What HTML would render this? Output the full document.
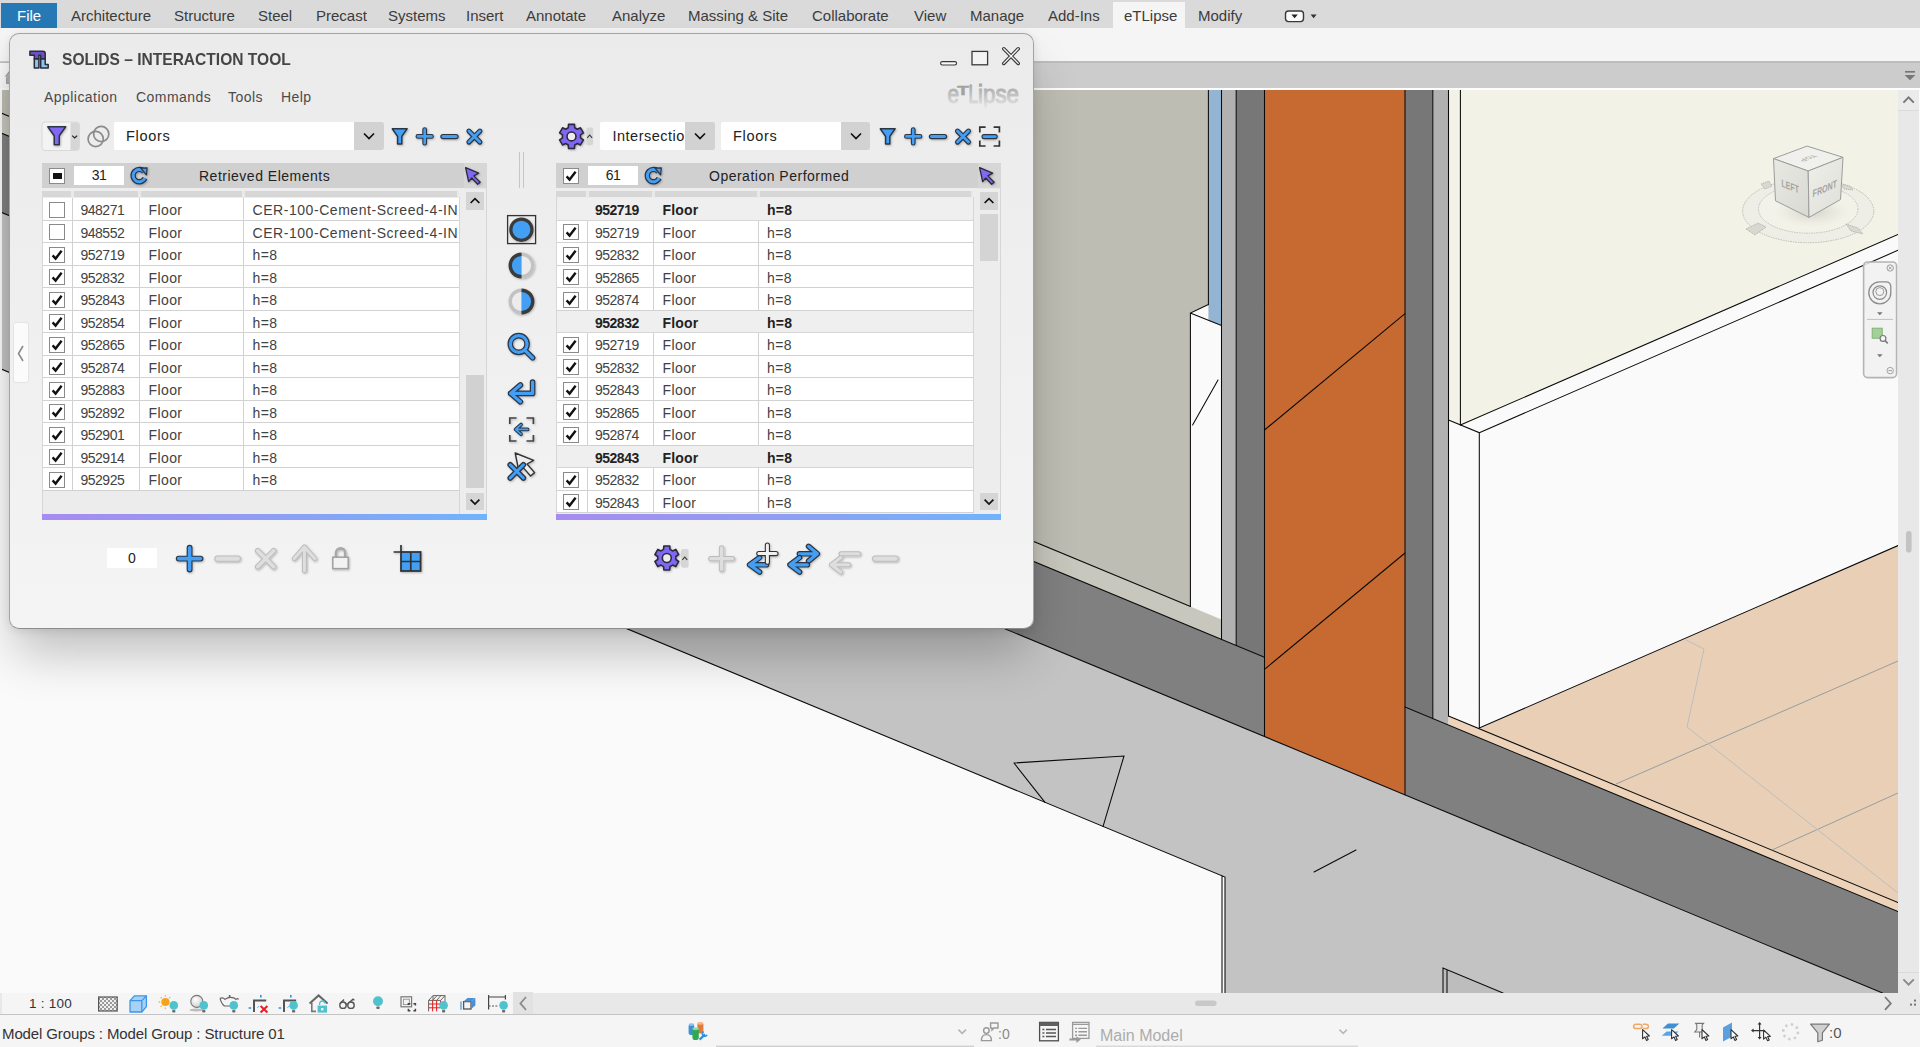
<!DOCTYPE html>
<html lang="en"><head><meta charset="utf-8"><title>SOLIDS – INTERACTION TOOL</title>
<style>
*{box-sizing:border-box}
html,body{margin:0;padding:0}
body{width:1920px;height:1047px;overflow:hidden;position:relative;background:#fafafa;font-family:"Liberation Sans",sans-serif;color:#333}
.abs{position:absolute}
#tabs{left:0;top:0;width:1920px;height:28px;background:#dadada}
#tabs span{position:absolute;top:6px;font-size:15px;color:#3c3c3c;white-space:nowrap;line-height:19px}
#filetab{left:1px;top:3px;width:56px;height:25px;background:#2779b5}
#etab{left:1113px;top:2px;width:72px;height:26px;background:#f5f5f5}
#panel{left:0;top:28px;width:1920px;height:33px;background:#f5f5f5}
#bar2{left:0;top:61px;width:1920px;height:27px;background:linear-gradient(90deg,#f8f8f8 0,#f8f8f8 12px,#cccccc 12px);border-top:2px solid #bdbdbd}
#wline{left:0;top:88px;width:1920px;height:2px;background:#fdfdfd}
#view{left:2px;top:90px;width:1896px;height:903px;overflow:hidden;background:#fafafa}
#vscroll{left:1898px;top:90px;width:22px;height:903px;background:#e8e8e8}
#vcb{left:0;top:993px;width:1920px;height:21px;background:#e8e8e8}
#vcbl{left:2px;top:993px;width:511px;height:21px;background:#f5f5f5}
#sline{left:0;top:1014px;width:1920px;height:1px;background:#c4c4c4}
#status{left:0;top:1015px;width:1920px;height:32px;background:#f5f5f5}
#status .t{position:absolute;font-size:15px;white-space:nowrap;line-height:18px}
</style></head><body>
<div id="tabs" class="abs"></div>
<div id="panel" class="abs"></div>
<div id="bar2" class="abs"></div>
<div id="wline" class="abs"></div>
<div id="view" class="abs">
<svg width="1898" height="903" viewBox="0 90 1898 903" style="position:absolute;left:-2px;top:0">
<g stroke="none">
<polygon points="0,211.8 1882.5,993 1225,993 1225,877 0,368.6" fill="#c3c3c3"/>
<polygon points="0,90 1221.6,90 1221.6,619.4 0,112.5" fill="#bdbdb3"/>
<polygon points="0,112.5 1221.6,619.4 1221.6,639.4 0,132.5" fill="#c7c7bd"/>
<polygon points="0,132.5 1264.4,657.2 1264.4,736.5 0,211.8" fill="#808080"/>
<rect x="1208.4" y="90" width="13.2" height="236" fill="#93b5d3"/>
<polygon points="1190.3,313 1208.4,304.6 1208.4,320.4 1221.5,325.6 1221.6,619.4 1190.5,606.5" fill="#fafafa"/>
<polygon points="1221.5,90 1236.2,90 1236.2,645.5 1221.5,639.4" fill="#b1b1b1"/>
<polygon points="1236.2,90 1264.5,90 1264.5,657.2 1236.2,645.5" fill="#777777"/>
<polygon points="1264.5,90 1405,90 1405,794.8 1264.5,736.5" fill="#c66a31"/>
<polygon points="1405,90 1432.8,90 1432.8,718.5 1405,707.0" fill="#777777"/>
<polygon points="1432.8,90 1448.5,90 1448.5,725.1 1432.8,718.5" fill="#b1b1b1"/>
<polygon points="1448.5,90 1898,90 1898,234.5 1460.4,425.1 1448.5,420.1" fill="#f2f2e6"/>
<polygon points="1448.5,716 1479.3,728 1898,545.6 1898,902.5" fill="#e8cfb6"/>
<polygon points="1448.5,716 1898,902.5 1898,911.6 1448.5,725.1" fill="#ecd3ba"/>
<polygon points="1405,707 1898,911.6 1898,993 1882.5,993 1405,794.8" fill="#808080"/>
<polygon points="1443,968 1503,993 1443,993" fill="#bdbdbd"/>
</g>
<g stroke="#0a0a0a" stroke-width="1.05" fill="none" stroke-linecap="round">
<path d="M0,368.6 L1225,877 L1225,993 M1222,875.8 L1222,993"/>
<path d="M0,112.5 L1190.5,606.5"/>
<path d="M0,132.5 L1264.5,657.2"/>
<path d="M0,211.8 L1882.5,993"/>
<path d="M1208.4,90 V304.6 M1221.5,90 V639.4 M1236.2,90 V645.5 M1264.5,90 V736.5 M1405,90 V794.8 M1432.8,90 V718.5 M1448.5,90 V716 M1460.4,90 V425.1"/>
<path d="M1190.4,606.5 V313 L1208.4,304.6 M1190.3,313 L1221.5,325.6"/>
<path d="M1218,380 L1192.6,425"/>
<path d="M1264.5,669.3 L1405,553 M1264.5,430 L1405,313.7"/>
<path d="M1460.4,425.1 L1898,234.5 M1479.3,432.7 L1898,250.3 M1448.5,420.1 L1479.3,432.7 V728 L1898,545.6"/>
<path d="M1405,707 L1898,911.6"/>
<path d="M1448.5,716 L1898,902.5"/>
<path d="M1014,763 L1124,756 L1103,826.6 M1014,763 L1045,802.4"/>
<path d="M1314,872 L1356,850"/>
<path d="M1443,993 V968 L1503,993 M1447,993 V970"/>
</g>
<g stroke="#8f989d" stroke-width="1" fill="none" opacity="0.9">
<path d="M1616,784 L1898,661 M1772,850 L1898,793"/>
<path d="M1686,640 L1704,649 L1687,727 L1898,893" stroke="#b9bcbc"/>
</g></svg></div>
<div id="vscroll" class="abs"></div><div id="filetab" class="abs"></div>
<div id="etab" class="abs"></div>
<div id="tabs2" class="abs" style="left:0;top:0;width:1920px;height:28px">
<style>#tabs2 span{position:absolute;top:6px;font-size:15px;color:#3c3c3c;white-space:nowrap;line-height:19px}</style>
<span style="left:17px;color:#fff">File</span>
<span style="left:71px">Architecture</span>
<span style="left:174px">Structure</span>
<span style="left:258px">Steel</span>
<span style="left:316px">Precast</span>
<span style="left:388px">Systems</span>
<span style="left:466px">Insert</span>
<span style="left:526px">Annotate</span>
<span style="left:612px">Analyze</span>
<span style="left:688px">Massing &amp; Site</span>
<span style="left:812px">Collaborate</span>
<span style="left:914px">View</span>
<span style="left:970px">Manage</span>
<span style="left:1048px">Add-Ins</span>
<span style="left:1124px">eTLipse</span>
<span style="left:1198px">Modify</span>
</div>
<div id="vcb" class="abs"></div>
<div id="vcbl" class="abs"></div>
<div id="sline" class="abs"></div>
<div id="status" class="abs">
<span class="t" style="left:2px;top:9.5px;color:#333;letter-spacing:-.12px">Model Groups : Model Group : Structure 01</span>
<span class="t" style="left:1100px;top:11.5px;color:#acacac;font-size:16px">Main Model</span>
<span class="t" style="left:998px;top:10px;color:#8a8a8a;font-size:14px">:0</span>
<span class="t" style="left:1829px;top:9px;color:#555;font-size:15px">:0</span>
</div>
<div class="abs" style="left:29px;top:996px;font-size:13.5px;letter-spacing:.25px;color:#333;white-space:nowrap">1 : 100</div>
<svg class="abs" style="left:0;top:0;pointer-events:none" width="1920" height="1047" viewBox="0 0 1920 1047">
<defs><pattern id="chk" width="4" height="4" patternUnits="userSpaceOnUse"><rect width="4" height="4" fill="#f0f0f0"/><rect width="2" height="2" fill="#9a9a9a"/><rect x="2" y="2" width="2" height="2" fill="#9a9a9a"/></pattern>
<radialGradient id="sph" cx="40%" cy="35%" r="70%"><stop offset="0" stop-color="#fff"/><stop offset="1" stop-color="#cfcfcf"/></radialGradient>
<radialGradient id="vcsh" cx="50%" cy="50%" r="50%"><stop offset="0" stop-color="#b8b8ae" stop-opacity=".55"/><stop offset="1" stop-color="#d8d8ce" stop-opacity="0"/></radialGradient>
<linearGradient id="vcl" x1="0" y1="0" x2="1" y2="1"><stop offset="0" stop-color="#e9e9e4"/><stop offset="1" stop-color="#d9d9d3"/></linearGradient>
<linearGradient id="vcr" x1="0" y1="0" x2="1" y2="1"><stop offset="0" stop-color="#efefea"/><stop offset="1" stop-color="#dfdfd9"/></linearGradient></defs>
<rect x="1285.5" y="11" width="18" height="10.6" rx="3" fill="#fafafa" stroke="#3a3a3a" stroke-width="1.4"/><path d="M1291.4,14.6 h6.4 l-3.2,3.6 z" fill="#222"/><path d="M1310.6,14.6 h6 l-3,3.6 z" fill="#333"/>
<path d="M1905,71.8 h10" stroke="#777" stroke-width="1.7"/><path d="M1904.6,75 h10.8 l-5.4,5.2 z" fill="#777"/>
<rect x="1898" y="90" width="21" height="20" fill="#ebebeb"/><rect x="1898" y="110" width="21" height="1" fill="#dadada"/><rect x="1919" y="90" width="1" height="903" fill="#fbfbfb"/><path d="M1903.4,102.6 L1908.6,97.4 L1913.8,102.6" fill="none" stroke="#777" stroke-width="1.9"/>
<rect x="1898" y="972" width="21" height="1" fill="#dadada"/><path d="M1903.4,979.4 L1908.6,984.6 L1913.8,979.4" fill="none" stroke="#8a8a8a" stroke-width="1.9"/>
<rect x="1906" y="531" width="5.6" height="21.6" rx="2.8" fill="#c3c3c3"/>
<rect x="1195" y="1000.4" width="21.6" height="5.6" rx="2.8" fill="#c8c8c8"/>
<path d="M1885,997 L1890.8,1003.4 L1885,1009.8" fill="none" stroke="#7a7a7a" stroke-width="1.8"/>
<rect x="1910" y="1003.6" width="2" height="2" fill="#777"/><rect x="1914" y="1003.6" width="2" height="2" fill="#777"/><rect x="1914" y="999.6" width="2" height="2" fill="#777"/>
<rect x="513" y="992" width="20" height="22" fill="#e2e2e2"/><path d="M526,997 L520.4,1003.4 L526,1009.8" fill="none" stroke="#8c8c8c" stroke-width="1.8"/>
<path d="M5.4,76.5 L9.6,71 V83.4 H6.6 V78" fill="#b4b4b4" stroke="#9a9a9a" stroke-width="1"/>
<rect x="0" y="61" width="10" height="1" fill="#cfcfcf"/>
<rect x="98.6" y="997" width="18.6" height="14" fill="url(#chk)" stroke="#555" stroke-width="1.2"/>
<path d="M130,1000.6 L134.6,995.8 H146.4 V1006.6 L141.8,1012 H130 Z" fill="#a9d1f6" stroke="#3a97ea" stroke-width="1.3" stroke-linejoin="round"/><path d="M130,1000.6 H141.8 V1012 M141.8,1000.6 L146.4,995.8" fill="none" stroke="#3a97ea" stroke-width="1.3"/>
<circle cx="165.4" cy="1002" r="4.1" fill="#f6a31c"/><g stroke="#f8b84e" stroke-width="1.3"><path d="M165.4,995 v1.6 M165.4,1007.4 v1.6 M158.6,1002 h1.6 M160.6,997.2 l1.1,1.1 M170.2,997.2 l-1.1,1.1 M160.6,1006.8 l1.1,-1.1"/></g>
<circle cx="173.8" cy="1005.4" r="4.3" fill="#4fc3cd"/><rect x="172.20000000000002" y="1009.9999999999999" width="3.2" height="2.6" rx="0.8" fill="#6d6d6d"/>
<ellipse cx="196.4" cy="1010" rx="7" ry="1.5" fill="#bdbdbd"/><circle cx="196.8" cy="1001.4" r="6" fill="url(#sph)" stroke="#777" stroke-width="1.1"/>
<circle cx="203.8" cy="1005.4" r="4.3" fill="#4fc3cd"/><rect x="202.20000000000002" y="1009.9999999999999" width="3.2" height="2.6" rx="0.8" fill="#6d6d6d"/>
<path d="M220,998.4 q3,-1.4 5,1 q2.4,-2 5.6,-2 q3.6,0 5.4,2 q1.6,-1.6 2.6,0 M220,998.4 q1.6,5.6 4.4,7.6 h8" fill="none" stroke="#666" stroke-width="1.2"/><path d="M229.6,995 v2" stroke="#666" stroke-width="1.6"/>
<circle cx="233.8" cy="1005.4" r="4.3" fill="#4fc3cd"/><rect x="232.20000000000002" y="1009.9999999999999" width="3.2" height="2.6" rx="0.8" fill="#6d6d6d"/>
<path d="M254.0,1012 V1000.4 H266.2" fill="none" stroke="#555" stroke-width="2"/><path d="M248.6,1008 h2.6 M260.8,995 v2.6" stroke="#2f8fe0" stroke-width="1.6"/><path d="M257.6,1007.6 l1.4,-1.4" stroke="#2f8fe0" stroke-width="1"/>
<path d="M260.6,1006 L267.4,1012.4 M267.4,1006 L260.6,1012.4" stroke="#ee1c25" stroke-width="2.1"/>
<path d="M284.0,1012 V1000.4 H296.20000000000005" fill="none" stroke="#555" stroke-width="2"/><path d="M278.6,1008 h2.6 M290.8,995 v2.6" stroke="#2f8fe0" stroke-width="1.6"/><path d="M287.6,1007.6 l1.4,-1.4" stroke="#2f8fe0" stroke-width="1"/>
<circle cx="293.6" cy="1005.4" r="4.3" fill="#4fc3cd"/><rect x="292.0" y="1009.9999999999999" width="3.2" height="2.6" rx="0.8" fill="#6d6d6d"/>
<path d="M309.6,1003.6 L318.6,995.4 L327.6,1003.6" fill="none" stroke="#666" stroke-width="2"/><path d="M311.8,1002.6 V1011.4 H316" fill="none" stroke="#777" stroke-width="1.6"/><path d="M319.6,1005.2 v-1.6 a2.6,2.6 0 0 1 5.2,0" fill="none" stroke="#4fc3cd" stroke-width="1.3"/><rect x="317.6" y="1005.6" width="9.4" height="7" fill="#4fc3cd"/><rect x="321" y="1008" width="2.4" height="2.4" fill="#e9fbfc"/>
<g fill="none" stroke="#555" stroke-width="1.4"><circle cx="343" cy="1005.2" r="3.2"/><circle cx="351" cy="1005.2" r="3.2"/><path d="M346.2,1004.4 q0.8,-0.8 1.6,0 M340.6,1003 l3.4,-3.4 M349.4,1002.6 l3.6,-3.4 l1.4,1"/></g>
<circle cx="378" cy="1001.2" r="5" fill="#4fc3cd"/><rect x="376.4" y="1006.5" width="3.2" height="2.6" rx="0.8" fill="#6d6d6d"/>
<rect x="401" y="996.8" width="10.6" height="10" fill="#f5f5f5" stroke="#777" stroke-width="1.2"/><rect x="403.4" y="999.2" width="6" height="5.4" fill="none" stroke="#999" stroke-width="1"/><path d="M408.4,1005 v-1.2 h2 M413.4,1003.8 h2 v1.8 M415.4,1008.8 v2 h-2 M410.4,1010.8 h-2 v-2" fill="none" stroke="#444" stroke-width="1.5"/>
<g fill="none" stroke="#666" stroke-width="1"><path d="M428.6,1000.4 L433,995.6 H445 V1006 M428.6,1000.4 H440.6 L445,995.6 M428.6,1000.4 V1011.4 M433,995.6 V1000 M437,995.6 l-4.4,4.8 M441,995.6 l-4.4,4.8"/></g><g fill="none" stroke="#e02020" stroke-width="1"><path d="M432.6,1000.4 V1011.4 M436.6,1000.4 V1011.4 M428.6,1004 H440 M428.6,1007.8 H440 M440.6,1000.4 V1004"/></g>
<circle cx="443.6" cy="1005.4" r="4.3" fill="#4fc3cd"/><rect x="442.0" y="1009.9999999999999" width="3.2" height="2.6" rx="0.8" fill="#6d6d6d"/>
<path d="M461,1009.8 V1001.6" stroke="#4a90d9" stroke-width="1.2"/><rect x="463.6" y="1001.6" width="7.4" height="7.4" fill="#f4f4f4" stroke="#555" stroke-width="1.3"/><path d="M463.6,1001.6 L467.4,998 H475.4 L471,1001.6 Z" fill="#4a90d9"/><path d="M471,1001.6 L475.4,998 V1005.6 L471,1009 Z" fill="#4a90d9"/>
<path d="M488.6,995 V1009.4 M505.4,995 V999.6 M488.6,997 H505.4" fill="none" stroke="#444" stroke-width="1.2"/><path d="M488.6,1006 H498" stroke="#555" stroke-width="1.2" stroke-dasharray="2 1.4"/>
<circle cx="503.6" cy="1005.4" r="4.3" fill="#4fc3cd"/><rect x="502.0" y="1009.9999999999999" width="3.2" height="2.6" rx="0.8" fill="#6d6d6d"/>
<g><rect x="688.6" y="1024" width="5.6" height="11" rx="2" fill="#3f8fd6"/><ellipse cx="691.4" cy="1024.6" rx="2.8" ry="1.3" fill="#8cc3f0"/><rect x="697.4" y="1022.6" width="6" height="11" rx="2" fill="#e3793a"/><ellipse cx="700.4" cy="1023.4" rx="3" ry="1.3" fill="#f5b891"/><rect x="692.4" y="1028" width="6.4" height="12" rx="2.2" fill="#2fa84f"/><ellipse cx="695.6" cy="1028.8" rx="3.2" ry="1.4" fill="#8fdca3"/><path d="M699.6,1039.6 L705,1034.4" stroke="#2f8fe0" stroke-width="2.2"/><path d="M703.6,1031.8 a2.4,2.4 0 1 0 3.4,3" fill="none" stroke="#2f8fe0" stroke-width="1.6"/></g>
<rect x="716" y="1045.6" width="258" height="1.4" fill="#d0d0d0"/><rect x="1096" y="1045.6" width="262" height="1.4" fill="#d8d8d8"/>
<path d="M958.4,1029.6 L962.2,1033.4 L966,1029.6" fill="none" stroke="#b4b4b4" stroke-width="1.5"/><path d="M1339.4,1029.6 L1343.2,1033.4 L1347,1029.6" fill="none" stroke="#b9b9b9" stroke-width="1.5"/>
<g fill="none" stroke="#999" stroke-width="1.4"><circle cx="986.4" cy="1030.6" r="2.8"/><path d="M981.4,1040.6 q0,-6 5,-6 q5,0 5,6 z"/><path d="M990.6,1023 h7.4 v5 h-4 l-2,2 v-2 h-1.4 z"/></g>
<rect x="1039.6" y="1022.4" width="18.8" height="18.4" fill="#f6f6f6" stroke="#4c4c4c" stroke-width="1.3"/><rect x="1039.6" y="1022.4" width="18.8" height="3.6" fill="#606060"/><g stroke="#555" stroke-width="1.5"><path d="M1042.4,1029.4 h2 M1046,1029.4 h10 M1042.4,1033 h2 M1046,1033 h10 M1042.4,1036.6 h2 M1046,1036.6 h10"/></g>
<rect x="1072.6" y="1022.4" width="16.4" height="16" fill="#f6f6f6" stroke="#9a9a9a" stroke-width="1.3"/><g stroke="#9a9a9a" stroke-width="1.4"><path d="M1072.6,1024.4 h16.4 M1075,1028.4 h2 M1078.4,1028.4 h8.6 M1075,1031.8 h2 M1078.4,1031.8 h8.6 M1075,1035.2 h2 M1078.4,1035.2 h8.6"/></g><path d="M1069.4,1038.6 h7 v-2.4 l4.4,3.4 l-4.4,3.4 v-2.4 h-7 z" fill="#9a9a9a"/>
<path d="M1636.4,1024.2 h3 q2.6,0 2.6,2.2 q0,2.2 -2.6,2.2 h-3 q-2.8,0 -2.8,-2.2 q0,-2.2 2.800,-2.200 z M1642.800,1024.2 h3 q2.600,0 2.600,2.200 q0,2.200 -2.600,2.200 h-3" fill="none" stroke="#f0a868" stroke-width="1.5"/>
<path d="M1642.60,1029.60 L1642.60,1038.80 L1644.90,1036.80 L1646.60,1040.40 L1648.20,1039.60 L1646.60,1036.20 L1649.40,1036.00Z" fill="#fff" stroke="#333" stroke-width="1.1" stroke-linejoin="round"/>
<path d="M1668,1023.600 h11.400 l-5.600,5 h-11.400 z" fill="#3f8fd6"/><path d="M1666.600,1031.400 h12 l-4.800,4.400 h-12 z" fill="#5aa3e4"/>
<path d="M1671.60,1029.60 L1671.60,1038.80 L1673.90,1036.80 L1675.60,1040.40 L1677.20,1039.60 L1675.60,1036.20 L1678.40,1036.00Z" fill="#fff" stroke="#333" stroke-width="1.1" stroke-linejoin="round"/>
<path d="M1695.600,1023.400 h8 l-1.400,1.600 v4.600 l2,2.400 h-9.400 l2,-2.400 v-4.600 z M1699.600,1032 v5.400" fill="#f0f0f0" stroke="#777" stroke-width="1.1"/>
<path d="M1702.00,1029.60 L1702.00,1038.80 L1704.30,1036.80 L1706.00,1040.40 L1707.60,1039.60 L1706.00,1036.20 L1708.80,1036.00Z" fill="#fff" stroke="#333" stroke-width="1.1" stroke-linejoin="round"/>
<path d="M1723,1027.600 l9,-5.200 v14.400 l-9,4.600 z" fill="#5a9fdf"/>
<path d="M1731.00,1029.60 L1731.00,1038.80 L1733.30,1036.80 L1735.00,1040.40 L1736.60,1039.60 L1735.00,1036.20 L1737.80,1036.00Z" fill="#fff" stroke="#333" stroke-width="1.1" stroke-linejoin="round"/>
<g stroke="#333" stroke-width="1.2" fill="#333"><path d="M1759.600,1023.600 v14.400 M1752.600,1030.600 h11" fill="none"/><path d="M1759.600,1022 l-2,2.600 h4 z M1759.600,1039.600 l-2,-2.600 h4 z M1751,1030.600 l2.600,-2 v4 z" stroke="none"/></g>
<path d="M1763.60,1030.00 L1763.60,1039.20 L1765.90,1037.20 L1767.60,1040.80 L1769.20,1040.00 L1767.60,1036.60 L1770.40,1036.40Z" fill="#fff" stroke="#333" stroke-width="1.1" stroke-linejoin="round"/>
<circle cx="1790.600" cy="1031.800" r="7.400" fill="none" stroke="#cfcfcf" stroke-width="2.600" stroke-dasharray="2.4 3.410"/>
<path d="M1810.600,1024.200 h18.800 l-7,8.600 v7.400 l-4.600,1.600 v-9 z" fill="#d0d0d0" stroke="#777" stroke-width="1.200" stroke-linejoin="round"/>
<g>
<ellipse cx="1808.200" cy="211" rx="65.600" ry="31.700" fill="#ededed" opacity="0"/>
<ellipse cx="1808.200" cy="211" rx="65.600" ry="31.700" fill="#eeeee6" stroke="#bcbcb4" stroke-width="1" stroke-dasharray="1.5 1"/>
<ellipse cx="1808.200" cy="209" rx="49.700" ry="24.200" fill="#f2f2e8" stroke="#c2c2ba" stroke-width="1" stroke-dasharray="1.5 1"/>
<ellipse cx="1812" cy="212" rx="38" ry="15" fill="url(#vcsh)"/>
<path d="M1773.500,158.600 L1807,146.100 L1843,157.300 L1808.200,171 Z" fill="#f0f0ec" stroke="#9c9c9c" stroke-width="1"/>
<path d="M1773.500,158.600 L1808.200,171 L1809,217.400 L1775.500,200.800 Z" fill="url(#vcl)" stroke="#9c9c9c" stroke-width="1"/>
<path d="M1808.200,171 L1843,157.300 L1840.500,199.500 L1809,217.400 Z" fill="url(#vcr)" stroke="#9c9c9c" stroke-width="1"/>
<g font-family="Liberation Sans, sans-serif" font-weight="bold" fill="#a3a3a0">
<text transform="matrix(0.92,0.36,0.02,1,1781.600,186.500)" font-size="10.500" textLength="19" lengthAdjust="spacingAndGlyphs">LEFT</text>
<text transform="matrix(0.90,-0.40,-0.03,1,1812.600,197.600)" font-size="10.500" textLength="27" lengthAdjust="spacingAndGlyphs">FRONT</text>
<text transform="matrix(-0.74,0.29,-0.72,-0.26,1813,154.4)" font-size="9.5" fill="#b0b0ab">TOP</text>
</g>
<g fill="#d8d8d0" stroke="#aaa9a0" stroke-width=".8" stroke-dasharray="1.2 .8"><path d="M1761,184 l8,-3 l3,5 l-7,3 z M1841,184 l9,2 l3,4 l-9,-1 z M1746,229 l12,-6 l8,4 l-11,8 z M1846,224 l12,4 l5,6 l-12,-3 z"/></g>
</g>
<rect x="1863.600" y="262" width="33" height="115.600" rx="4" fill="#f0f0f0" fill-opacity=".85" stroke="#b4b4b4" stroke-width="1.600"/>
<circle cx="1890.200" cy="268" r="3.200" fill="#f4f4f4" stroke="#a0a0a0" stroke-width="1"/><path d="M1888.600,266.400 l3.200,3.200 M1891.800,266.400 l-3.200,3.200" stroke="#a0a0a0" stroke-width="1"/>
<path d="M1879.800,281.800 h6 q5,0 5,5 v5.600 a11,11 0 1 1 -11,-10.600 z" fill="#f2f2f2" stroke="#8c8c8c" stroke-width="1.300"/><circle cx="1879.800" cy="292.600" r="6.800" fill="none" stroke="#8c8c8c" stroke-width="1.200"/><circle cx="1879.800" cy="291.600" r="4" fill="none" stroke="#9a9a9a" stroke-width="1"/>
<path d="M1877,312.200 h5.600 l-2.800,3 z M1877,354.200 h5.600 l-2.800,3 z" fill="#777"/>
<path d="M1867,319.400 h26" stroke="#c0c0c0" stroke-width="1"/>
<rect x="1872.200" y="328.200" width="10" height="10" fill="#a5cf9a" stroke="#7fb273" stroke-width="1"/><circle cx="1883" cy="338.400" r="2.900" fill="#f4f4f4" stroke="#777" stroke-width="1.200"/><path d="M1885,340.600 l2.800,2.800" stroke="#777" stroke-width="1.500"/>
<circle cx="1890.200" cy="370.600" r="3.200" fill="#f4f4f4" stroke="#a0a0a0" stroke-width="1"/><path d="M1888.400,370.600 h3.600" stroke="#a0a0a0" stroke-width="1.100"/>
</svg><style>
#dlg{left:9px;top:33px;width:1025px;height:596px;border:1px solid #a4a4a4;border-bottom-color:#8c8c8c;border-radius:10px;background:linear-gradient(#ebebeb,#f4f4f4);box-shadow:0 30px 50px -6px rgba(0,0,0,.24),0 2px 10px rgba(0,0,0,.10);overflow:hidden}
#dlg .dt{font-size:14px;color:#424242;white-space:nowrap;line-height:16px}
#dlg .num{letter-spacing:-0.5px}
#dlg .cb{background:#fff;border:1px solid #8a8a8a}
#dlg .row{background:#fff;border-bottom:1px solid #d2d2d2}
#dlg .vl{background:#d2d2d2;width:1px}
#dlg .b{font-weight:bold;color:#222}
</style>
<div id="dlg" class="abs">
<span class="abs dt" style="left:51.5px;top:15.6px;font-size:17px;font-weight:bold;color:#454545;line-height:20px;transform-origin:0 50%;transform:scaleX(.915)">SOLIDS – INTERACTION TOOL</span>
<span class="abs dt" style="left:34px;top:54px;font-size:14px;letter-spacing:.45px;color:#4a4a4a;line-height:18px">Application</span>
<span class="abs dt" style="left:126px;top:54px;font-size:14px;letter-spacing:.45px;color:#4a4a4a;line-height:18px">Commands</span>
<span class="abs dt" style="left:218px;top:54px;font-size:14px;letter-spacing:.45px;color:#4a4a4a;line-height:18px">Tools</span>
<span class="abs dt" style="left:271px;top:54px;font-size:14px;letter-spacing:.45px;color:#4a4a4a;line-height:18px">Help</span>
<div class="abs " style="left:32px;top:129px;width:445px;height:25.3px;background:#d0d0d0"></div>
<div class="abs cb" style="left:39px;top:134px;width:16px;height:16px;"><div style="margin:4px 2.5px;width:9px;height:6px;background:#111"></div></div>
<div class="abs " style="left:64px;top:132px;width:50px;height:19px;background:#fff;text-align:center;font-size:14px;line-height:19.5px;color:#222;letter-spacing:-.5px">31</div>
<span class="abs dt" style="left:189px;top:134px;font-size:14px;letter-spacing:.5px;color:#222">Retrieved Elements</span>
<div class="abs " style="left:32px;top:157px;width:417.1px;height:6px;background:#e9e9e9"></div>
<div class="abs " style="left:32px;top:157px;width:29px;height:5.5px;background:#d7d7d7"></div>
<div class="abs " style="left:64px;top:157px;width:64px;height:5.5px;background:#d7d7d7"></div>
<div class="abs " style="left:131px;top:157px;width:101px;height:5.5px;background:#d7d7d7"></div>
<div class="abs " style="left:235px;top:157px;width:211.5px;height:5.5px;background:#d7d7d7"></div>
<div class="abs " style="left:32px;top:163px;width:417.1px;height:317px;background:#ececec"></div>
<div class="abs row" style="left:32px;top:164.25px;width:417.1px;height:22.5px;"></div>
<div class="abs vl" style="left:62px;top:164.25px;width:1px;height:22.5px;"></div>
<div class="abs vl" style="left:129px;top:164.25px;width:1px;height:22.5px;"></div>
<div class="abs vl" style="left:233px;top:164.25px;width:1px;height:22.5px;"></div>
<div class="abs cb" style="left:39px;top:167.75px;width:16px;height:16px;"></div>
<span class="abs dt num" style="left:70.5px;top:168.05px;">948271</span>
<span class="abs dt" style="left:138.5px;top:168.05px;letter-spacing:.4px">Floor</span>
<span class="abs dt" style="left:242.5px;top:168.05px;letter-spacing:.55px">CER-100-Cement-Screed-4-IN</span>
<div class="abs row" style="left:32px;top:186.75px;width:417.1px;height:22.5px;"></div>
<div class="abs vl" style="left:62px;top:186.75px;width:1px;height:22.5px;"></div>
<div class="abs vl" style="left:129px;top:186.75px;width:1px;height:22.5px;"></div>
<div class="abs vl" style="left:233px;top:186.75px;width:1px;height:22.5px;"></div>
<div class="abs cb" style="left:39px;top:190.25px;width:16px;height:16px;"></div>
<span class="abs dt num" style="left:70.5px;top:190.55px;">948552</span>
<span class="abs dt" style="left:138.5px;top:190.55px;letter-spacing:.4px">Floor</span>
<span class="abs dt" style="left:242.5px;top:190.55px;letter-spacing:.55px">CER-100-Cement-Screed-4-IN</span>
<div class="abs row" style="left:32px;top:209.25px;width:417.1px;height:22.5px;"></div>
<div class="abs vl" style="left:62px;top:209.25px;width:1px;height:22.5px;"></div>
<div class="abs vl" style="left:129px;top:209.25px;width:1px;height:22.5px;"></div>
<div class="abs vl" style="left:233px;top:209.25px;width:1px;height:22.5px;"></div>
<div class="abs cb" style="left:39px;top:212.75px;width:16px;height:16px;"><svg width="14" height="14" viewBox="0 0 14 14" style="display:block"><path d="M2.6,7.4 L5.6,10.6 L11.6,2.8" fill="none" stroke="#111" stroke-width="2.4"/></svg></div>
<span class="abs dt num" style="left:70.5px;top:213.05px;">952719</span>
<span class="abs dt" style="left:138.5px;top:213.05px;letter-spacing:.4px">Floor</span>
<span class="abs dt" style="left:242.5px;top:213.05px;letter-spacing:.4px">h=8</span>
<div class="abs row" style="left:32px;top:231.75px;width:417.1px;height:22.5px;"></div>
<div class="abs vl" style="left:62px;top:231.75px;width:1px;height:22.5px;"></div>
<div class="abs vl" style="left:129px;top:231.75px;width:1px;height:22.5px;"></div>
<div class="abs vl" style="left:233px;top:231.75px;width:1px;height:22.5px;"></div>
<div class="abs cb" style="left:39px;top:235.25px;width:16px;height:16px;"><svg width="14" height="14" viewBox="0 0 14 14" style="display:block"><path d="M2.6,7.4 L5.6,10.6 L11.6,2.8" fill="none" stroke="#111" stroke-width="2.4"/></svg></div>
<span class="abs dt num" style="left:70.5px;top:235.55px;">952832</span>
<span class="abs dt" style="left:138.5px;top:235.55px;letter-spacing:.4px">Floor</span>
<span class="abs dt" style="left:242.5px;top:235.55px;letter-spacing:.4px">h=8</span>
<div class="abs row" style="left:32px;top:254.25px;width:417.1px;height:22.5px;"></div>
<div class="abs vl" style="left:62px;top:254.25px;width:1px;height:22.5px;"></div>
<div class="abs vl" style="left:129px;top:254.25px;width:1px;height:22.5px;"></div>
<div class="abs vl" style="left:233px;top:254.25px;width:1px;height:22.5px;"></div>
<div class="abs cb" style="left:39px;top:257.75px;width:16px;height:16px;"><svg width="14" height="14" viewBox="0 0 14 14" style="display:block"><path d="M2.6,7.4 L5.6,10.6 L11.6,2.8" fill="none" stroke="#111" stroke-width="2.4"/></svg></div>
<span class="abs dt num" style="left:70.5px;top:258.05px;">952843</span>
<span class="abs dt" style="left:138.5px;top:258.05px;letter-spacing:.4px">Floor</span>
<span class="abs dt" style="left:242.5px;top:258.05px;letter-spacing:.4px">h=8</span>
<div class="abs row" style="left:32px;top:276.75px;width:417.1px;height:22.5px;"></div>
<div class="abs vl" style="left:62px;top:276.75px;width:1px;height:22.5px;"></div>
<div class="abs vl" style="left:129px;top:276.75px;width:1px;height:22.5px;"></div>
<div class="abs vl" style="left:233px;top:276.75px;width:1px;height:22.5px;"></div>
<div class="abs cb" style="left:39px;top:280.25px;width:16px;height:16px;"><svg width="14" height="14" viewBox="0 0 14 14" style="display:block"><path d="M2.6,7.4 L5.6,10.6 L11.6,2.8" fill="none" stroke="#111" stroke-width="2.4"/></svg></div>
<span class="abs dt num" style="left:70.5px;top:280.55px;">952854</span>
<span class="abs dt" style="left:138.5px;top:280.55px;letter-spacing:.4px">Floor</span>
<span class="abs dt" style="left:242.5px;top:280.55px;letter-spacing:.4px">h=8</span>
<div class="abs row" style="left:32px;top:299.25px;width:417.1px;height:22.5px;"></div>
<div class="abs vl" style="left:62px;top:299.25px;width:1px;height:22.5px;"></div>
<div class="abs vl" style="left:129px;top:299.25px;width:1px;height:22.5px;"></div>
<div class="abs vl" style="left:233px;top:299.25px;width:1px;height:22.5px;"></div>
<div class="abs cb" style="left:39px;top:302.75px;width:16px;height:16px;"><svg width="14" height="14" viewBox="0 0 14 14" style="display:block"><path d="M2.6,7.4 L5.6,10.6 L11.6,2.8" fill="none" stroke="#111" stroke-width="2.4"/></svg></div>
<span class="abs dt num" style="left:70.5px;top:303.05px;">952865</span>
<span class="abs dt" style="left:138.5px;top:303.05px;letter-spacing:.4px">Floor</span>
<span class="abs dt" style="left:242.5px;top:303.05px;letter-spacing:.4px">h=8</span>
<div class="abs row" style="left:32px;top:321.75px;width:417.1px;height:22.5px;"></div>
<div class="abs vl" style="left:62px;top:321.75px;width:1px;height:22.5px;"></div>
<div class="abs vl" style="left:129px;top:321.75px;width:1px;height:22.5px;"></div>
<div class="abs vl" style="left:233px;top:321.75px;width:1px;height:22.5px;"></div>
<div class="abs cb" style="left:39px;top:325.25px;width:16px;height:16px;"><svg width="14" height="14" viewBox="0 0 14 14" style="display:block"><path d="M2.6,7.4 L5.6,10.6 L11.6,2.8" fill="none" stroke="#111" stroke-width="2.4"/></svg></div>
<span class="abs dt num" style="left:70.5px;top:325.55px;">952874</span>
<span class="abs dt" style="left:138.5px;top:325.55px;letter-spacing:.4px">Floor</span>
<span class="abs dt" style="left:242.5px;top:325.55px;letter-spacing:.4px">h=8</span>
<div class="abs row" style="left:32px;top:344.25px;width:417.1px;height:22.5px;"></div>
<div class="abs vl" style="left:62px;top:344.25px;width:1px;height:22.5px;"></div>
<div class="abs vl" style="left:129px;top:344.25px;width:1px;height:22.5px;"></div>
<div class="abs vl" style="left:233px;top:344.25px;width:1px;height:22.5px;"></div>
<div class="abs cb" style="left:39px;top:347.75px;width:16px;height:16px;"><svg width="14" height="14" viewBox="0 0 14 14" style="display:block"><path d="M2.6,7.4 L5.6,10.6 L11.6,2.8" fill="none" stroke="#111" stroke-width="2.4"/></svg></div>
<span class="abs dt num" style="left:70.5px;top:348.05px;">952883</span>
<span class="abs dt" style="left:138.5px;top:348.05px;letter-spacing:.4px">Floor</span>
<span class="abs dt" style="left:242.5px;top:348.05px;letter-spacing:.4px">h=8</span>
<div class="abs row" style="left:32px;top:366.75px;width:417.1px;height:22.5px;"></div>
<div class="abs vl" style="left:62px;top:366.75px;width:1px;height:22.5px;"></div>
<div class="abs vl" style="left:129px;top:366.75px;width:1px;height:22.5px;"></div>
<div class="abs vl" style="left:233px;top:366.75px;width:1px;height:22.5px;"></div>
<div class="abs cb" style="left:39px;top:370.25px;width:16px;height:16px;"><svg width="14" height="14" viewBox="0 0 14 14" style="display:block"><path d="M2.6,7.4 L5.6,10.6 L11.6,2.8" fill="none" stroke="#111" stroke-width="2.4"/></svg></div>
<span class="abs dt num" style="left:70.5px;top:370.55px;">952892</span>
<span class="abs dt" style="left:138.5px;top:370.55px;letter-spacing:.4px">Floor</span>
<span class="abs dt" style="left:242.5px;top:370.55px;letter-spacing:.4px">h=8</span>
<div class="abs row" style="left:32px;top:389.25px;width:417.1px;height:22.5px;"></div>
<div class="abs vl" style="left:62px;top:389.25px;width:1px;height:22.5px;"></div>
<div class="abs vl" style="left:129px;top:389.25px;width:1px;height:22.5px;"></div>
<div class="abs vl" style="left:233px;top:389.25px;width:1px;height:22.5px;"></div>
<div class="abs cb" style="left:39px;top:392.75px;width:16px;height:16px;"><svg width="14" height="14" viewBox="0 0 14 14" style="display:block"><path d="M2.6,7.4 L5.6,10.6 L11.6,2.8" fill="none" stroke="#111" stroke-width="2.4"/></svg></div>
<span class="abs dt num" style="left:70.5px;top:393.05px;">952901</span>
<span class="abs dt" style="left:138.5px;top:393.05px;letter-spacing:.4px">Floor</span>
<span class="abs dt" style="left:242.5px;top:393.05px;letter-spacing:.4px">h=8</span>
<div class="abs row" style="left:32px;top:411.75px;width:417.1px;height:22.5px;"></div>
<div class="abs vl" style="left:62px;top:411.75px;width:1px;height:22.5px;"></div>
<div class="abs vl" style="left:129px;top:411.75px;width:1px;height:22.5px;"></div>
<div class="abs vl" style="left:233px;top:411.75px;width:1px;height:22.5px;"></div>
<div class="abs cb" style="left:39px;top:415.25px;width:16px;height:16px;"><svg width="14" height="14" viewBox="0 0 14 14" style="display:block"><path d="M2.6,7.4 L5.6,10.6 L11.6,2.8" fill="none" stroke="#111" stroke-width="2.4"/></svg></div>
<span class="abs dt num" style="left:70.5px;top:415.55px;">952914</span>
<span class="abs dt" style="left:138.5px;top:415.55px;letter-spacing:.4px">Floor</span>
<span class="abs dt" style="left:242.5px;top:415.55px;letter-spacing:.4px">h=8</span>
<div class="abs row" style="left:32px;top:434.25px;width:417.1px;height:22.5px;"></div>
<div class="abs vl" style="left:62px;top:434.25px;width:1px;height:22.5px;"></div>
<div class="abs vl" style="left:129px;top:434.25px;width:1px;height:22.5px;"></div>
<div class="abs vl" style="left:233px;top:434.25px;width:1px;height:22.5px;"></div>
<div class="abs cb" style="left:39px;top:437.75px;width:16px;height:16px;"><svg width="14" height="14" viewBox="0 0 14 14" style="display:block"><path d="M2.6,7.4 L5.6,10.6 L11.6,2.8" fill="none" stroke="#111" stroke-width="2.4"/></svg></div>
<span class="abs dt num" style="left:70.5px;top:438.05px;">952925</span>
<span class="abs dt" style="left:138.5px;top:438.05px;letter-spacing:.4px">Floor</span>
<span class="abs dt" style="left:242.5px;top:438.05px;letter-spacing:.4px">h=8</span>
<div class="abs " style="left:32px;top:163px;width:1px;height:317px;background:#d6d6d6"></div>
<div class="abs " style="left:449.1px;top:163px;width:1px;height:317px;background:#d6d6d6"></div>
<div class="abs " style="left:450.1px;top:155px;width:26.9px;height:325px;background:#ededed"></div>
<div class="abs " style="left:476px;top:154.3px;width:1px;height:326px;background:#d6d6d6"></div>
<div class="abs " style="left:32px;top:480px;width:445px;height:6px;background:linear-gradient(90deg,#a78bf0,#8f9df5 50%,#6fb4fb)"></div>
<div class="abs " style="left:546px;top:129px;width:445px;height:25.3px;background:#d0d0d0"></div>
<div class="abs cb" style="left:553px;top:134px;width:16px;height:16px;"><svg width="14" height="14" viewBox="0 0 14 14" style="display:block"><path d="M2.6,7.4 L5.6,10.6 L11.6,2.8" fill="none" stroke="#111" stroke-width="2.4"/></svg></div>
<div class="abs " style="left:578px;top:132px;width:50px;height:19px;background:#fff;text-align:center;font-size:14px;line-height:19.5px;color:#222;letter-spacing:-.5px">61</div>
<span class="abs dt" style="left:699px;top:134px;font-size:14px;letter-spacing:.5px;color:#222">Operation Performed</span>
<div class="abs " style="left:546px;top:157px;width:417.1px;height:6px;background:#e9e9e9"></div>
<div class="abs " style="left:546px;top:157px;width:29.5px;height:5.5px;background:#d7d7d7"></div>
<div class="abs " style="left:578.5px;top:157px;width:63.5px;height:5.5px;background:#d7d7d7"></div>
<div class="abs " style="left:645px;top:157px;width:101.5px;height:5.5px;background:#d7d7d7"></div>
<div class="abs " style="left:749.5px;top:157px;width:211px;height:5.5px;background:#d7d7d7"></div>
<div class="abs " style="left:546px;top:163px;width:417.1px;height:317px;background:#ececec"></div>
<div class="abs " style="left:546px;top:164.25px;width:417.1px;height:22.5px;background:#efefef;border-bottom:1px solid #d6d6d6"></div>
<span class="abs dt num b" style="left:585px;top:168.05px;">952719</span>
<span class="abs dt b" style="left:652.5px;top:168.05px;letter-spacing:.2px">Floor</span>
<span class="abs dt b" style="left:757px;top:168.05px;letter-spacing:.2px">h=8</span>
<div class="abs row" style="left:546px;top:186.75px;width:417.1px;height:22.5px;"></div>
<div class="abs vl" style="left:576.5px;top:186.75px;width:1px;height:22.5px;"></div>
<div class="abs vl" style="left:643px;top:186.75px;width:1px;height:22.5px;"></div>
<div class="abs vl" style="left:747.5px;top:186.75px;width:1px;height:22.5px;"></div>
<div class="abs cb" style="left:553px;top:190.25px;width:16px;height:16px;"><svg width="14" height="14" viewBox="0 0 14 14" style="display:block"><path d="M2.6,7.4 L5.6,10.6 L11.6,2.8" fill="none" stroke="#111" stroke-width="2.4"/></svg></div>
<span class="abs dt num" style="left:585px;top:190.55px;">952719</span>
<span class="abs dt" style="left:652.5px;top:190.55px;letter-spacing:.4px">Floor</span>
<span class="abs dt" style="left:757px;top:190.55px;letter-spacing:.4px">h=8</span>
<div class="abs row" style="left:546px;top:209.25px;width:417.1px;height:22.5px;"></div>
<div class="abs vl" style="left:576.5px;top:209.25px;width:1px;height:22.5px;"></div>
<div class="abs vl" style="left:643px;top:209.25px;width:1px;height:22.5px;"></div>
<div class="abs vl" style="left:747.5px;top:209.25px;width:1px;height:22.5px;"></div>
<div class="abs cb" style="left:553px;top:212.75px;width:16px;height:16px;"><svg width="14" height="14" viewBox="0 0 14 14" style="display:block"><path d="M2.6,7.4 L5.6,10.6 L11.6,2.8" fill="none" stroke="#111" stroke-width="2.4"/></svg></div>
<span class="abs dt num" style="left:585px;top:213.05px;">952832</span>
<span class="abs dt" style="left:652.5px;top:213.05px;letter-spacing:.4px">Floor</span>
<span class="abs dt" style="left:757px;top:213.05px;letter-spacing:.4px">h=8</span>
<div class="abs row" style="left:546px;top:231.75px;width:417.1px;height:22.5px;"></div>
<div class="abs vl" style="left:576.5px;top:231.75px;width:1px;height:22.5px;"></div>
<div class="abs vl" style="left:643px;top:231.75px;width:1px;height:22.5px;"></div>
<div class="abs vl" style="left:747.5px;top:231.75px;width:1px;height:22.5px;"></div>
<div class="abs cb" style="left:553px;top:235.25px;width:16px;height:16px;"><svg width="14" height="14" viewBox="0 0 14 14" style="display:block"><path d="M2.6,7.4 L5.6,10.6 L11.6,2.8" fill="none" stroke="#111" stroke-width="2.4"/></svg></div>
<span class="abs dt num" style="left:585px;top:235.55px;">952865</span>
<span class="abs dt" style="left:652.5px;top:235.55px;letter-spacing:.4px">Floor</span>
<span class="abs dt" style="left:757px;top:235.55px;letter-spacing:.4px">h=8</span>
<div class="abs row" style="left:546px;top:254.25px;width:417.1px;height:22.5px;"></div>
<div class="abs vl" style="left:576.5px;top:254.25px;width:1px;height:22.5px;"></div>
<div class="abs vl" style="left:643px;top:254.25px;width:1px;height:22.5px;"></div>
<div class="abs vl" style="left:747.5px;top:254.25px;width:1px;height:22.5px;"></div>
<div class="abs cb" style="left:553px;top:257.75px;width:16px;height:16px;"><svg width="14" height="14" viewBox="0 0 14 14" style="display:block"><path d="M2.6,7.4 L5.6,10.6 L11.6,2.8" fill="none" stroke="#111" stroke-width="2.4"/></svg></div>
<span class="abs dt num" style="left:585px;top:258.05px;">952874</span>
<span class="abs dt" style="left:652.5px;top:258.05px;letter-spacing:.4px">Floor</span>
<span class="abs dt" style="left:757px;top:258.05px;letter-spacing:.4px">h=8</span>
<div class="abs " style="left:546px;top:276.75px;width:417.1px;height:22.5px;background:#efefef;border-bottom:1px solid #d6d6d6"></div>
<span class="abs dt num b" style="left:585px;top:280.55px;">952832</span>
<span class="abs dt b" style="left:652.5px;top:280.55px;letter-spacing:.2px">Floor</span>
<span class="abs dt b" style="left:757px;top:280.55px;letter-spacing:.2px">h=8</span>
<div class="abs row" style="left:546px;top:299.25px;width:417.1px;height:22.5px;"></div>
<div class="abs vl" style="left:576.5px;top:299.25px;width:1px;height:22.5px;"></div>
<div class="abs vl" style="left:643px;top:299.25px;width:1px;height:22.5px;"></div>
<div class="abs vl" style="left:747.5px;top:299.25px;width:1px;height:22.5px;"></div>
<div class="abs cb" style="left:553px;top:302.75px;width:16px;height:16px;"><svg width="14" height="14" viewBox="0 0 14 14" style="display:block"><path d="M2.6,7.4 L5.6,10.6 L11.6,2.8" fill="none" stroke="#111" stroke-width="2.4"/></svg></div>
<span class="abs dt num" style="left:585px;top:303.05px;">952719</span>
<span class="abs dt" style="left:652.5px;top:303.05px;letter-spacing:.4px">Floor</span>
<span class="abs dt" style="left:757px;top:303.05px;letter-spacing:.4px">h=8</span>
<div class="abs row" style="left:546px;top:321.75px;width:417.1px;height:22.5px;"></div>
<div class="abs vl" style="left:576.5px;top:321.75px;width:1px;height:22.5px;"></div>
<div class="abs vl" style="left:643px;top:321.75px;width:1px;height:22.5px;"></div>
<div class="abs vl" style="left:747.5px;top:321.75px;width:1px;height:22.5px;"></div>
<div class="abs cb" style="left:553px;top:325.25px;width:16px;height:16px;"><svg width="14" height="14" viewBox="0 0 14 14" style="display:block"><path d="M2.6,7.4 L5.6,10.6 L11.6,2.8" fill="none" stroke="#111" stroke-width="2.4"/></svg></div>
<span class="abs dt num" style="left:585px;top:325.55px;">952832</span>
<span class="abs dt" style="left:652.5px;top:325.55px;letter-spacing:.4px">Floor</span>
<span class="abs dt" style="left:757px;top:325.55px;letter-spacing:.4px">h=8</span>
<div class="abs row" style="left:546px;top:344.25px;width:417.1px;height:22.5px;"></div>
<div class="abs vl" style="left:576.5px;top:344.25px;width:1px;height:22.5px;"></div>
<div class="abs vl" style="left:643px;top:344.25px;width:1px;height:22.5px;"></div>
<div class="abs vl" style="left:747.5px;top:344.25px;width:1px;height:22.5px;"></div>
<div class="abs cb" style="left:553px;top:347.75px;width:16px;height:16px;"><svg width="14" height="14" viewBox="0 0 14 14" style="display:block"><path d="M2.6,7.4 L5.6,10.6 L11.6,2.8" fill="none" stroke="#111" stroke-width="2.4"/></svg></div>
<span class="abs dt num" style="left:585px;top:348.05px;">952843</span>
<span class="abs dt" style="left:652.5px;top:348.05px;letter-spacing:.4px">Floor</span>
<span class="abs dt" style="left:757px;top:348.05px;letter-spacing:.4px">h=8</span>
<div class="abs row" style="left:546px;top:366.75px;width:417.1px;height:22.5px;"></div>
<div class="abs vl" style="left:576.5px;top:366.75px;width:1px;height:22.5px;"></div>
<div class="abs vl" style="left:643px;top:366.75px;width:1px;height:22.5px;"></div>
<div class="abs vl" style="left:747.5px;top:366.75px;width:1px;height:22.5px;"></div>
<div class="abs cb" style="left:553px;top:370.25px;width:16px;height:16px;"><svg width="14" height="14" viewBox="0 0 14 14" style="display:block"><path d="M2.6,7.4 L5.6,10.6 L11.6,2.8" fill="none" stroke="#111" stroke-width="2.4"/></svg></div>
<span class="abs dt num" style="left:585px;top:370.55px;">952865</span>
<span class="abs dt" style="left:652.5px;top:370.55px;letter-spacing:.4px">Floor</span>
<span class="abs dt" style="left:757px;top:370.55px;letter-spacing:.4px">h=8</span>
<div class="abs row" style="left:546px;top:389.25px;width:417.1px;height:22.5px;"></div>
<div class="abs vl" style="left:576.5px;top:389.25px;width:1px;height:22.5px;"></div>
<div class="abs vl" style="left:643px;top:389.25px;width:1px;height:22.5px;"></div>
<div class="abs vl" style="left:747.5px;top:389.25px;width:1px;height:22.5px;"></div>
<div class="abs cb" style="left:553px;top:392.75px;width:16px;height:16px;"><svg width="14" height="14" viewBox="0 0 14 14" style="display:block"><path d="M2.6,7.4 L5.6,10.6 L11.6,2.8" fill="none" stroke="#111" stroke-width="2.4"/></svg></div>
<span class="abs dt num" style="left:585px;top:393.05px;">952874</span>
<span class="abs dt" style="left:652.5px;top:393.05px;letter-spacing:.4px">Floor</span>
<span class="abs dt" style="left:757px;top:393.05px;letter-spacing:.4px">h=8</span>
<div class="abs " style="left:546px;top:411.75px;width:417.1px;height:22.5px;background:#efefef;border-bottom:1px solid #d6d6d6"></div>
<span class="abs dt num b" style="left:585px;top:415.55px;">952843</span>
<span class="abs dt b" style="left:652.5px;top:415.55px;letter-spacing:.2px">Floor</span>
<span class="abs dt b" style="left:757px;top:415.55px;letter-spacing:.2px">h=8</span>
<div class="abs row" style="left:546px;top:434.25px;width:417.1px;height:22.5px;"></div>
<div class="abs vl" style="left:576.5px;top:434.25px;width:1px;height:22.5px;"></div>
<div class="abs vl" style="left:643px;top:434.25px;width:1px;height:22.5px;"></div>
<div class="abs vl" style="left:747.5px;top:434.25px;width:1px;height:22.5px;"></div>
<div class="abs cb" style="left:553px;top:437.75px;width:16px;height:16px;"><svg width="14" height="14" viewBox="0 0 14 14" style="display:block"><path d="M2.6,7.4 L5.6,10.6 L11.6,2.8" fill="none" stroke="#111" stroke-width="2.4"/></svg></div>
<span class="abs dt num" style="left:585px;top:438.05px;">952832</span>
<span class="abs dt" style="left:652.5px;top:438.05px;letter-spacing:.4px">Floor</span>
<span class="abs dt" style="left:757px;top:438.05px;letter-spacing:.4px">h=8</span>
<div class="abs row" style="left:546px;top:456.75px;width:417.1px;height:22.5px;"></div>
<div class="abs vl" style="left:576.5px;top:456.75px;width:1px;height:22.5px;"></div>
<div class="abs vl" style="left:643px;top:456.75px;width:1px;height:22.5px;"></div>
<div class="abs vl" style="left:747.5px;top:456.75px;width:1px;height:22.5px;"></div>
<div class="abs cb" style="left:553px;top:460.25px;width:16px;height:16px;"><svg width="14" height="14" viewBox="0 0 14 14" style="display:block"><path d="M2.6,7.4 L5.6,10.6 L11.6,2.8" fill="none" stroke="#111" stroke-width="2.4"/></svg></div>
<span class="abs dt num" style="left:585px;top:460.55px;">952843</span>
<span class="abs dt" style="left:652.5px;top:460.55px;letter-spacing:.4px">Floor</span>
<span class="abs dt" style="left:757px;top:460.55px;letter-spacing:.4px">h=8</span>
<div class="abs " style="left:546px;top:163px;width:1px;height:317px;background:#d6d6d6"></div>
<div class="abs " style="left:963.1px;top:163px;width:1px;height:317px;background:#d6d6d6"></div>
<div class="abs " style="left:964.1px;top:155px;width:26.9px;height:325px;background:#ededed"></div>
<div class="abs " style="left:990px;top:154.3px;width:1px;height:326px;background:#d6d6d6"></div>
<div class="abs " style="left:546px;top:480px;width:445px;height:6px;background:linear-gradient(90deg,#a78bf0,#8f9df5 50%,#6fb4fb)"></div>
<div class="abs " style="left:456px;top:158.2px;width:17.9px;height:17.4px;background:#d5d5d5"><svg width="18" height="17.4" viewBox="-1 -1 18 17.4" style="display:block"><path d="M3.6,10 L8,5.6 L12.4,10" fill="none" stroke="#111" stroke-width="1.7"/></svg></div>
<div class="abs " style="left:456px;top:458.6px;width:17.9px;height:17.4px;background:#d5d5d5"><svg width="18" height="17.4" viewBox="-1 -1 18 17.4" style="display:block"><path d="M3.6,5.6 L8,10 L12.4,5.6" fill="none" stroke="#111" stroke-width="1.7"/></svg></div>
<div class="abs " style="left:456px;top:341.3px;width:17.9px;height:113px;background:#d1d1d1"></div>
<div class="abs " style="left:970px;top:158.2px;width:17.9px;height:17.4px;background:#d5d5d5"><svg width="18" height="17.4" viewBox="-1 -1 18 17.4" style="display:block"><path d="M3.6,10 L8,5.6 L12.4,10" fill="none" stroke="#111" stroke-width="1.7"/></svg></div>
<div class="abs " style="left:970px;top:458.6px;width:17.9px;height:17.4px;background:#d5d5d5"><svg width="18" height="17.4" viewBox="-1 -1 18 17.4" style="display:block"><path d="M3.6,5.6 L8,10 L12.4,5.6" fill="none" stroke="#111" stroke-width="1.7"/></svg></div>
<div class="abs " style="left:970px;top:179.6px;width:17.9px;height:47px;background:#d4d4d4"></div>
<div class="abs " style="left:104px;top:88px;width:269.5px;height:28px;background:#fff;border-radius:2px"></div>
<span class="abs dt" style="left:116px;top:94px;font-size:14.5px;letter-spacing:0.7px;color:#222;line-height:17px">Floors</span>
<div class="abs " style="left:344px;top:88px;width:29.5px;height:28px;background:#d2d2d2;border-radius:0 2px 2px 0"><svg width="30" height="28" viewBox="0 0 30 28" style="display:block"><path d="M10,11.5 L15,16.5 L20,11.5" fill="none" stroke="#111" stroke-width="1.7"/></svg></div>
<div class="abs " style="left:589.5px;top:88px;width:115px;height:28px;background:#fff;border-radius:2px"></div>
<div class="abs " style="left:589.5px;top:88px;width:85.5px;height:28px;overflow:hidden"><span class="dt" style="position:absolute;left:13px;top:6px;font-size:14.5px;letter-spacing:0.5px;color:#222;line-height:17px">Intersection</span></div>
<div class="abs " style="left:675px;top:88px;width:29.5px;height:28px;background:#d2d2d2;border-radius:0 2px 2px 0"><svg width="30" height="28" viewBox="0 0 30 28" style="display:block"><path d="M10,11.5 L15,16.5 L20,11.5" fill="none" stroke="#111" stroke-width="1.7"/></svg></div>
<div class="abs " style="left:710.5px;top:88px;width:149.5px;height:28px;background:#fff;border-radius:2px"></div>
<span class="abs dt" style="left:723px;top:94px;font-size:14.5px;letter-spacing:0.7px;color:#222;line-height:17px">Floors</span>
<div class="abs " style="left:830.5px;top:88px;width:29.5px;height:28px;background:#d2d2d2;border-radius:0 2px 2px 0"><svg width="30" height="28" viewBox="0 0 30 28" style="display:block"><path d="M10,11.5 L15,16.5 L20,11.5" fill="none" stroke="#111" stroke-width="1.7"/></svg></div>
<div class="abs " style="left:97px;top:514px;width:50px;height:20px;background:#fff;text-align:center;font-size:14px;line-height:20.5px;color:#222">0</div>
<div class="abs " style="left:508.6px;top:118px;width:1.4px;height:35.5px;background:#c6c6c6"></div>
<div class="abs " style="left:513px;top:118px;width:1.4px;height:35.5px;background:#c6c6c6"></div>
<div class="abs " style="left:3px;top:288px;width:16px;height:61px;background:#fbfbfb;border:1px solid #e4e4e4;border-radius:3px"><svg width="14" height="59" viewBox="0 0 14 59" style="display:block"><path d="M9,23 L4.5,30.5 L9,38" fill="none" stroke="#8a8a8a" stroke-width="1.6"/></svg></div>
<svg class="abs" style="left:-1px;top:-1px" width="1024" height="595" viewBox="9 33 1024 595">
<defs><filter id="ds" x="-20%" y="-20%" width="150%" height="150%"><feDropShadow dx="0.8" dy="1" stdDeviation="0.8" flood-color="#000" flood-opacity="0.28"/></filter>
<linearGradient id="lg" x1="0" y1="0" x2="0" y2="1"><stop offset="0" stop-color="#9d9d9d"/><stop offset="0.75" stop-color="#d4d4d4"/><stop offset="1" stop-color="#e6e6e6"/></linearGradient><linearGradient id="lg2" gradientUnits="userSpaceOnUse" x1="0" y1="84" x2="0" y2="108"><stop offset="0" stop-color="#a2a2a2"/><stop offset="0.7" stop-color="#d2d2d2"/><stop offset="1" stop-color="#e8e8e8"/></linearGradient></defs>
<g stroke="#2b2b3a" stroke-width="1.5" stroke-linejoin="round">
<path d="M29.9,51.2 H42.8 Q45.2,51.2 45.2,53.6 V59 H40.7 V55.2 H38.9 V59 H34.3 V55.2 H29.9 Z" fill="#6b4fc4"/>
<path d="M34.3,59 H38.9 V68 H34.3 Z M40.7,59 H45.2 V64.4 H48.2 V68 H40.7 Z" fill="#8cc3ea"/>
</g>
<rect x="940.6" y="61.6" width="16" height="3.4" rx="1.7" fill="#fafafa" stroke="#3a3a3a" stroke-width="1.1"/>
<rect x="972" y="51.4" width="15.6" height="13.4" fill="#f3f3f3" stroke="#3a3a3a" stroke-width="1.3"/>
<path d="M1003.8,48.8 L1018.2,63.4 M1018.2,48.8 L1003.8,63.4" stroke="#3a3a3a" stroke-width="3.6" stroke-linecap="round"/><path d="M1003.8,48.8 L1018.2,63.4 M1018.2,48.8 L1003.8,63.4" stroke="#f6f6f6" stroke-width="1.3" stroke-linecap="round"/>
<g fill="url(#lg2)" stroke="url(#lg2)" stroke-width="1.05" font-family="Liberation Sans, sans-serif"><text x="947.6" y="103" font-size="26" textLength="11.6" lengthAdjust="spacingAndGlyphs">e</text><text x="968.4" y="103" font-size="25.5" textLength="9.6" lengthAdjust="spacingAndGlyphs">L</text><text x="978" y="103" font-size="26" textLength="41" lengthAdjust="spacingAndGlyphs">ipse</text><text transform="translate(957.2,94.6) scale(1.45,1)" font-size="13" font-weight="bold" stroke-width=".5">T</text></g>
<rect x="42" y="122" width="37.5" height="28.5" rx="3" fill="#f3f3f3" stroke="#d9d9d9" stroke-width="1"/>
<path d="M70.5,122.5 H76.5 Q79,122.5 79,125 V147.5 Q79,150 76.5,150 H70.5 Z" fill="#d6d6d6"/>
<path d="M72.2,135.6 L74.7,138 L77.2,135.6" fill="none" stroke="#222" stroke-width="1.2"/>
<g filter="url(#ds)">
<path d="M47.8,126.8 H65.7 L59.285,135.75 V144.7 H54.215 V135.75 Z" fill="#8266f4" stroke="#2b3445" stroke-width="1.5" stroke-linejoin="round"/>
</g>
<g fill="none" stroke="#8c8c8c" stroke-width="1.7"><circle cx="95.7" cy="139" r="7.6"/><circle cx="101.2" cy="134" r="7.6"/></g>
<g filter="url(#ds)">
<path d="M392.3,128.8 H407.09999999999997 L401.832,136.4 V144.0 H397.568 V136.4 Z" fill="#429ff4" stroke="#2b3445" stroke-width="1.5" stroke-linejoin="round"/>
<path d="M417.9,136.4 H431.5 M424.7,129.6 V143.20000000000002" fill="none" stroke="#2b3445" stroke-width="4.8" stroke-linecap="round" stroke-linejoin="round" />
<path d="M417.9,136.4 H431.5 M424.7,129.6 V143.20000000000002" fill="none" stroke="#429ff4" stroke-width="2.6" stroke-linecap="round" stroke-linejoin="round" />
<path d="M443.0,136.6 H456.0" fill="none" stroke="#2b3445" stroke-width="5.4" stroke-linecap="round" stroke-linejoin="round" />
<path d="M443.0,136.6 H456.0" fill="none" stroke="#429ff4" stroke-width="3" stroke-linecap="round" stroke-linejoin="round" />
<path d="M468.9,131.1 L479.9,142.1 M479.9,131.1 L468.9,142.1" fill="none" stroke="#2b3445" stroke-width="5.1" stroke-linecap="round" stroke-linejoin="round" />
<path d="M468.9,131.1 L479.9,142.1 M479.9,131.1 L468.9,142.1" fill="none" stroke="#429ff4" stroke-width="2.8" stroke-linecap="round" stroke-linejoin="round" />
<path d="M568.27,127.81 L568.55,124.36 L574.45,124.36 L574.73,127.81 L577.32,129.31 L580.46,127.83 L583.40,132.93 L580.55,134.91 L580.55,137.89 L583.40,139.87 L580.46,144.97 L577.32,143.49 L574.73,144.99 L574.45,148.44 L568.55,148.44 L568.27,144.99 L565.68,143.49 L562.54,144.97 L559.60,139.87 L562.45,137.89 L562.45,134.91 L559.60,132.93 L562.54,127.83 L565.68,129.31Z" fill="#8266f4" stroke="#2b2b3a" stroke-width="1.6" stroke-linejoin="round"/>
<circle cx="571.5" cy="136.4" r="4.46" fill="#ececec" stroke="#2b2b3a" stroke-width="1.6"/>
<path d="M880.3,128.8 H895.1 L889.832,136.4 V144.0 H885.5680000000001 V136.4 Z" fill="#429ff4" stroke="#2b3445" stroke-width="1.5" stroke-linejoin="round"/>
<path d="M906.4000000000001,136.4 H920.0 M913.2,129.6 V143.20000000000002" fill="none" stroke="#2b3445" stroke-width="4.8" stroke-linecap="round" stroke-linejoin="round" />
<path d="M906.4000000000001,136.4 H920.0 M913.2,129.6 V143.20000000000002" fill="none" stroke="#429ff4" stroke-width="2.6" stroke-linecap="round" stroke-linejoin="round" />
<path d="M931.5,136.6 H944.5" fill="none" stroke="#2b3445" stroke-width="5.4" stroke-linecap="round" stroke-linejoin="round" />
<path d="M931.5,136.6 H944.5" fill="none" stroke="#429ff4" stroke-width="3" stroke-linecap="round" stroke-linejoin="round" />
<path d="M957.5,131.1 L968.5,142.1 M968.5,131.1 L957.5,142.1" fill="none" stroke="#2b3445" stroke-width="5.1" stroke-linecap="round" stroke-linejoin="round" />
<path d="M957.5,131.1 L968.5,142.1 M968.5,131.1 L957.5,142.1" fill="none" stroke="#429ff4" stroke-width="2.8" stroke-linecap="round" stroke-linejoin="round" />
<path d="M984.0,136.6 H995.2" fill="none" stroke="#2b3445" stroke-width="5.1" stroke-linecap="round" stroke-linejoin="round" />
<path d="M984.0,136.6 H995.2" fill="none" stroke="#429ff4" stroke-width="2.8" stroke-linecap="round" stroke-linejoin="round" />
</g>
<rect x="586.3" y="127.6" width="6.8" height="17.6" rx="2" fill="#d6d6d6"/>
<path d="M587.3,137.8 L589.6999999999999,135.0 L592.0999999999999,137.8" fill="none" stroke="#333" stroke-width="1.1"/>
<path d="M979.8,132.5 V127.2 H985.6 M993.6,127.2 H999.4 V132.5 M999.4,140.6 V146 H993.6 M985.6,146 H979.8 V140.6" fill="none" stroke="#333" stroke-width="1.7"/>
<rect x="464" y="163" width="23" height="25.3" fill="#d7d7d7"/><rect x="978" y="163" width="23" height="25.3" fill="#d7d7d7"/>
<g filter="url(#ds)">
<path d="M465.60,167.60 L478.66,173.17 L473.86,175.86 L480.19,182.19 L477.70,184.30 L471.74,177.97 L468.67,181.62Z" fill="#8266f4" stroke="#2b2b3a" stroke-width="1.3" stroke-linejoin="round"/>
<path d="M979.60,167.60 L992.66,173.17 L987.86,175.86 L994.19,182.19 L991.70,184.30 L985.74,177.97 L982.67,181.62Z" fill="#8266f4" stroke="#2b2b3a" stroke-width="1.3" stroke-linejoin="round"/>
<path d="M144.38,172.04 A6.2,6.2 0 1 0 144.92,178.22" fill="none" stroke="#2b3445" stroke-width="5.4" stroke-linecap="butt"/>
<path d="M144.38,172.04 A6.2,6.2 0 1 0 144.92,178.22" fill="none" stroke="#429ff4" stroke-width="3" stroke-linecap="butt"/>
<path d="M140.8,168.20000000000002 L147.1,167.8 L146.5,175.0 Z" fill="#429ff4" stroke="#2b3445" stroke-width="1.2" stroke-linejoin="round"/>
<path d="M658.58,172.04 A6.2,6.2 0 1 0 659.12,178.22" fill="none" stroke="#2b3445" stroke-width="5.4" stroke-linecap="butt"/>
<path d="M658.58,172.04 A6.2,6.2 0 1 0 659.12,178.22" fill="none" stroke="#429ff4" stroke-width="3" stroke-linecap="butt"/>
<path d="M655.0,168.20000000000002 L661.3000000000001,167.8 L660.7,175.0 Z" fill="#429ff4" stroke="#2b3445" stroke-width="1.2" stroke-linejoin="round"/>
</g>
<rect x="507.6" y="215.6" width="28" height="28" fill="none" stroke="#333" stroke-width="1.3"/>
<g filter="url(#ds)">
<circle cx="521.4" cy="229.7" r="10.6" fill="#429ff4" stroke="#3a3a3a" stroke-width="3.2"/>
<path d="M521.5,254.2 A11.3,11.3 0 0 1 521.5,276.8" fill="#ececec" stroke="#c2c2c2" stroke-width="3.4"/>
<path d="M521.5,254.2 A11.3,11.3 0 0 0 521.5,276.8 Z" fill="#429ff4"/><path d="M521.5,254.2 A11.3,11.3 0 0 0 521.5,276.8" fill="none" stroke="#3a3a3a" stroke-width="3.4"/>
<path d="M521.5,290.2 A11.3,11.3 0 0 0 521.5,312.8" fill="#ececec" stroke="#c2c2c2" stroke-width="3.4"/>
<path d="M521.5,290.2 A11.3,11.3 0 0 1 521.5,312.8 Z" fill="#429ff4"/><path d="M521.5,290.2 A11.3,11.3 0 0 1 521.5,312.8" fill="none" stroke="#3a3a3a" stroke-width="3.4"/>
<path d="M518.7,344 m-8.4,0 a8.4,8.4 0 1 0 16.8,0 a8.4,8.4 0 1 0 -16.8,0 M525.2,350.6 L532.6,357.8" fill="none" stroke="#2b3445" stroke-width="5.6" stroke-linecap="round" stroke-linejoin="round" />
<path d="M518.7,344 m-8.4,0 a8.4,8.4 0 1 0 16.8,0 a8.4,8.4 0 1 0 -16.8,0 M525.2,350.6 L532.6,357.8" fill="none" stroke="#429ff4" stroke-width="3.2" stroke-linecap="round" stroke-linejoin="round" />
<path d="M532.6,382 V393.4 H510.6 M520.4,385 L510.6,393.4 L520.4,401.8" fill="none" stroke="#2b3445" stroke-width="5.6" stroke-linecap="round" stroke-linejoin="round" />
<path d="M532.6,382 V393.4 H510.6 M520.4,385 L510.6,393.4 L520.4,401.8" fill="none" stroke="#429ff4" stroke-width="3.2" stroke-linecap="round" stroke-linejoin="round" />
<path d="M509.8,424 V418 H516.5 M526.5,418 H533.4 V424 M533.4,435 V441 H526.5 M516.5,441 H509.8 V435" fill="none" stroke="#444" stroke-width="1.7"/>
<path d="M527.6,429.4 H516 M521,424.6 L515.6,429.4 L521,434.2" fill="none" stroke="#2b3445" stroke-width="3.8" stroke-linecap="round" stroke-linejoin="round" />
<path d="M527.6,429.4 H516 M521,424.6 L515.6,429.4 L521,434.2" fill="none" stroke="#429ff4" stroke-width="1.8" stroke-linecap="round" stroke-linejoin="round" />
<path d="M515.2,453 L533.6,460.4 L527,464 L534.6,472.6 L530.6,476 L523,467.4 L519,472 Z" fill="#ededed" stroke="#333" stroke-width="1.4" stroke-linejoin="round"/>
<path d="M510.19999999999993,464.79999999999995 L523.4,478.0 M523.4,464.79999999999995 L510.19999999999993,478.0" fill="none" stroke="#2b3445" stroke-width="5.6" stroke-linecap="round" stroke-linejoin="round" />
<path d="M510.19999999999993,464.79999999999995 L523.4,478.0 M523.4,464.79999999999995 L510.19999999999993,478.0" fill="none" stroke="#429ff4" stroke-width="3" stroke-linecap="round" stroke-linejoin="round" />
</g>
<g filter="url(#ds)">
<path d="M178.7,558.6 H200.5 M189.6,547.7 V569.5" fill="none" stroke="#2b3445" stroke-width="5.9" stroke-linecap="round" stroke-linejoin="round" />
<path d="M178.7,558.6 H200.5 M189.6,547.7 V569.5" fill="none" stroke="#429ff4" stroke-width="3.6" stroke-linecap="round" stroke-linejoin="round" />
<path d="M217.4,558.7 H237.79999999999998" fill="none" stroke="#bcbcbc" stroke-width="6.2" stroke-linecap="round" stroke-linejoin="round" />
<path d="M217.4,558.7 H237.79999999999998" fill="none" stroke="#dedede" stroke-width="4.2" stroke-linecap="round" stroke-linejoin="round" />
<path d="M257.7,550.7 L273.7,566.7 M273.7,550.7 L257.7,566.7" fill="none" stroke="#bcbcbc" stroke-width="5.6" stroke-linecap="round" stroke-linejoin="round" />
<path d="M257.7,550.7 L273.7,566.7 M273.7,550.7 L257.7,566.7" fill="none" stroke="#dedede" stroke-width="3.6" stroke-linecap="round" stroke-linejoin="round" />
<path d="M304.4,570.4 V547 M294.2,558.6 L304.4,547 L314.8,558.6" fill="none" stroke="#bcbcbc" stroke-width="5" stroke-linecap="round" stroke-linejoin="round" />
<path d="M304.4,570.4 V547 M294.2,558.6 L304.4,547 L314.8,558.6" fill="none" stroke="#dedede" stroke-width="3" stroke-linecap="round" stroke-linejoin="round" />
<path d="M336,557 V553 A4.6,4.6 0 0 1 345.2,553 V557" fill="none" stroke="#a8a8a8" stroke-width="2.6"/><rect x="332.8" y="557.2" width="15.4" height="11.4" fill="#f2f2f2" stroke="#a0a0a0" stroke-width="1.5"/>
<rect x="401" y="552" width="19.6" height="19" fill="#429ff4" stroke="#333" stroke-width="1.8"/><path d="M410.8,552 V571 M401,561.5 H420.6 M401,545 V552 M393.6,552 H401" stroke="#333" stroke-width="1.7" fill="none"/>
<path d="M663.57,549.41 L663.85,545.96 L669.75,545.96 L670.03,549.41 L672.62,550.91 L675.76,549.43 L678.70,554.53 L675.85,556.51 L675.85,559.49 L678.70,561.47 L675.76,566.57 L672.62,565.09 L670.03,566.59 L669.75,570.04 L663.85,570.04 L663.57,566.59 L660.98,565.09 L657.84,566.57 L654.90,561.47 L657.75,559.49 L657.75,556.51 L654.90,554.53 L657.84,549.43 L660.98,550.91Z" fill="#8266f4" stroke="#2b2b3a" stroke-width="1.6" stroke-linejoin="round"/>
<circle cx="666.8" cy="558" r="4.46" fill="#ececec" stroke="#2b2b3a" stroke-width="1.6"/>
<path d="M710.9,558.6 H732.3000000000001 M721.6,547.9 V569.3000000000001" fill="none" stroke="#bcbcbc" stroke-width="5.4" stroke-linecap="round" stroke-linejoin="round" />
<path d="M710.9,558.6 H732.3000000000001 M721.6,547.9 V569.3000000000001" fill="none" stroke="#dedede" stroke-width="3.4" stroke-linecap="round" stroke-linejoin="round" />
<path d="M766.6,564.8 H750 M759.6,557.6 L749.6,564.8 L759.6,572" fill="none" stroke="#2b3445" stroke-width="5.6" stroke-linecap="round" stroke-linejoin="round" />
<path d="M766.6,564.8 H750 M759.6,557.6 L749.6,564.8 L759.6,572" fill="none" stroke="#429ff4" stroke-width="3.2" stroke-linecap="round" stroke-linejoin="round" />
<path d="M758.8,553.6 H776.0 M767.4,545.0 V562.2" fill="none" stroke="#333" stroke-width="5.2" stroke-linecap="round" stroke-linejoin="round" />
<path d="M758.8,553.6 H776.0 M767.4,545.0 V562.2" fill="none" stroke="#f0f0f0" stroke-width="3" stroke-linecap="round" stroke-linejoin="round" />
<path d="M799.4,553.8 H816.6 M808.6,546.4 L817.4,553.8 L808.6,561" fill="none" stroke="#2b3445" stroke-width="5.6" stroke-linecap="round" stroke-linejoin="round" />
<path d="M799.4,553.8 H816.6 M808.6,546.4 L817.4,553.8 L808.6,561" fill="none" stroke="#429ff4" stroke-width="3.2" stroke-linecap="round" stroke-linejoin="round" />
<path d="M807.4,564.8 H791 M799.6,557.6 L790,564.8 L799.6,572" fill="none" stroke="#2b3445" stroke-width="5.6" stroke-linecap="round" stroke-linejoin="round" />
<path d="M807.4,564.8 H791 M799.6,557.6 L790,564.8 L799.6,572" fill="none" stroke="#429ff4" stroke-width="3.2" stroke-linecap="round" stroke-linejoin="round" />
<path d="M841,553.8 H858.6 M848.6,564.8 H832.4 M840.8,557.6 L831.4,564.8 L840.8,572" fill="none" stroke="#bcbcbc" stroke-width="5" stroke-linecap="round" stroke-linejoin="round" />
<path d="M841,553.8 H858.6 M848.6,564.8 H832.4 M840.8,557.6 L831.4,564.8 L840.8,572" fill="none" stroke="#dedede" stroke-width="3" stroke-linecap="round" stroke-linejoin="round" />
<path d="M875.1999999999999,558.7 H895.6" fill="none" stroke="#bcbcbc" stroke-width="6.2" stroke-linecap="round" stroke-linejoin="round" />
<path d="M875.1999999999999,558.7 H895.6" fill="none" stroke="#dedede" stroke-width="4.2" stroke-linecap="round" stroke-linejoin="round" />
</g>
<rect x="681" y="549" width="7.6" height="18.8" rx="2" fill="#d6d6d6"/>
<path d="M682.4,559.8 L684.8,557.0 L687.1999999999999,559.8" fill="none" stroke="#333" stroke-width="1.1"/>
</svg>
</div>
</body></html>
